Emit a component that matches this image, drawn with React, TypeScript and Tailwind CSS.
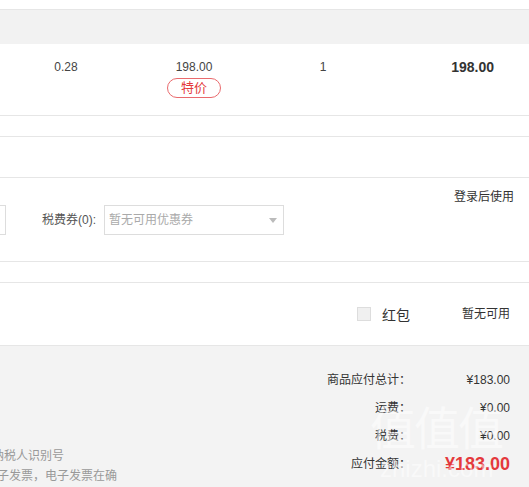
import React from "react";

const font = "font-['Liberation_Sans','Noto_Sans_CJK_SC',sans-serif]";

function SummaryRow({ label, value, strong }: { label: string; value: string; strong?: boolean }) {
  return (
    <div className="flex justify-end leading-[28px]">
      <span className="text-right text-[#333]">{label}</span>
      <span
        className={
          strong
            ? "w-[99px] text-right text-[18px] font-bold text-[#e4393c]"
            : "w-[99px] text-right text-[#333]"
        }
      >
        {value}
      </span>
    </div>
  );
}

export default function App() {
  return (
    <div className={`relative flex h-[487px] w-[529px] flex-col overflow-hidden bg-white text-[12px] text-[#333] ${font}`}>
      <div className="h-[9px] shrink-0" />
      {/* table header */}
      <div className="h-[35px] shrink-0 border-t border-[#e6e6e6] bg-[#f2f2f2]" />

      {/* product row */}
      <div className="flex h-[72px] shrink-0 border-b border-[#e6e6e6] pt-[15px] leading-[16px] text-[#444]">
        <div className="w-[132px] text-center">0.28</div>
        <div className="flex w-[124px] flex-col items-center">
          <span>198.00</span>
          <span className="mt-[3px] flex h-[20px] w-[54px] items-center justify-center rounded-full border border-[#e96a6d] text-[13px] text-[#e4393c]">
            特价
          </span>
        </div>
        <div className="w-[134px] text-center">1</div>
        <div className="flex-1 pr-[35px] text-right text-[14px] font-bold text-[#333]">198.00</div>
      </div>

      <div className="h-[21px] shrink-0 border-b border-[#e6e6e6]" />
      <div className="h-[41px] shrink-0 border-b border-[#e6e6e6]" />

      {/* coupons */}
      <div className="flex h-[84px] shrink-0 items-start border-b border-[#e6e6e6]">
        <div className="mt-[27px] flex items-center">
          <div className="h-[30px] w-[6px] border border-l-0 border-[#ddd]" />
          <span className="ml-[36px] text-[#555]">税费券(0):</span>
          <div className="ml-[8px] flex h-[30px] w-[180px] items-center justify-between border border-[#ddd] pl-[4px] pr-[6px] text-[#aaa]">
            <span>暂无可用优惠券</span>
            <svg width="8" height="5" viewBox="0 0 8 5">
              <path d="M0 0h8L4 5z" fill="#bbb" />
            </svg>
          </div>
        </div>
        <div className="ml-auto mt-[11px] pr-[15px] leading-[16px] text-[#333]">登录后使用</div>
      </div>

      <div className="h-[21px] shrink-0 border-b border-[#e6e6e6]" />

      {/* red packet */}
      <div className="flex h-[63px] shrink-0 items-center justify-end border-b border-[#e6e6e6] pr-[19px]">
        <span className="h-[14px] w-[14px] border border-[#ddd] bg-[#f0f0f0]" />
        <span className="ml-[11px] mt-[3px] text-[14px] text-[#333]">红包</span>
        <span className="ml-[52px] text-[#333]">暂无可用</span>
      </div>

      {/* summary */}
      <div className="relative flex flex-1 bg-[#f3f3f3]">
        <div className="flex-1 overflow-hidden pt-[100px] leading-[20px] text-[#999]">
          <div className="-ml-[8px] whitespace-nowrap">纳税人识别号</div>
          <div className="-ml-[3px] whitespace-nowrap">子发票，电子发票在确</div>
        </div>
        <div className="w-[300px] pr-[19px] pt-[20px]">
          <SummaryRow label="商品应付总计：" value="¥183.00" />
          <SummaryRow label="运费：" value="¥0.00" />
          <SummaryRow label="税费：" value="¥0.00" />
          <SummaryRow label="应付金额：" value="¥183.00" strong />
        </div>
        {/* watermark */}
        <div className="pointer-events-none absolute left-[370px] top-[58px] flex w-[150px] flex-col text-white/50">
          <span className="text-[46px] leading-[50px] tracking-[-2px]">值值值</span>
          <span className="pl-[10px] text-[24px] leading-[30px]">zhizhi.com</span>
        </div>
      </div>
    </div>
  );
}
